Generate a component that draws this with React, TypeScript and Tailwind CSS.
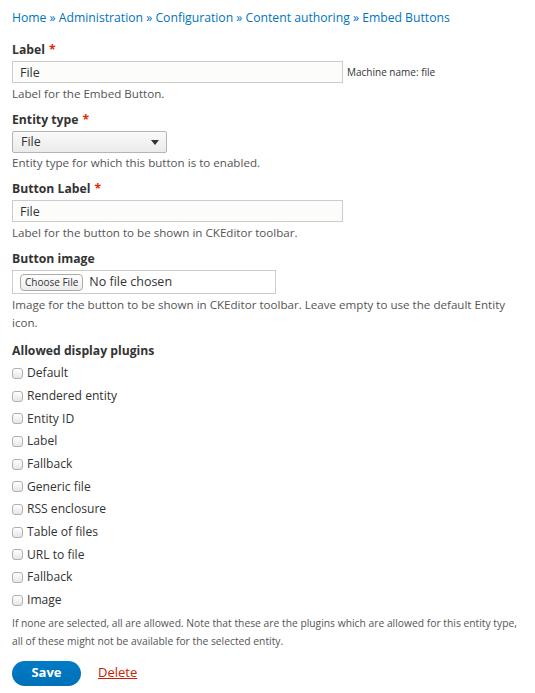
const plugins = [
  "Default",
  "Rendered entity",
  "Entity ID",
  "Label",
  "Fallback",
  "Generic file",
  "RSS enclosure",
  "Table of files",
  "URL to file",
  "Fallback",
  "Image",
];

function Req() {
  return <span className="ml-1 text-[#e62600]">*</span>;
}

export default function App() {
  return (
    <div
      className="min-h-[693px] bg-white px-3 pt-[9px] text-[#333]"
      style={{ fontFamily: '"Open Sans", "DejaVu Sans", sans-serif' }}
    >
      <nav className="text-[12.2px] leading-[18px] text-[#0074bd]">
        <a>Home</a> » <a>Administration</a> » <a>Configuration</a> »{" "}
        <a>Content authoring</a> » <a>Embed Buttons</a>
      </nav>

      {/* Label */}
      <div className="mt-[14px]">
        <label className="block text-[12.2px] font-bold leading-[18px]">
          Label
          <Req />
        </label>
        <div className="mt-[2px] flex items-center">
          <input
            defaultValue="File"
            className="h-[22px] w-[331px] border border-[#ccc] bg-[#fcfcfa] px-[7px] text-[12.5px] text-[#333] outline-0"
          />
          <span className="ml-1 text-[10px] text-[#333]">Machine name: file</span>
        </div>
        <p className="mt-[3px] text-[11.6px] leading-[16px] text-[#555]">
          Label for the Embed Button.
        </p>
      </div>

      {/* Entity type */}
      <div className="mt-[9px]">
        <label className="block text-[12.2px] font-bold leading-[18px]">
          Entity type
          <Req />
        </label>
        <div className="mt-[2px] flex h-[22px] w-[155px] items-center justify-between rounded-[2px] border border-[#b4b4b4] bg-gradient-to-b from-[#fafafa] to-[#ebebeb] pl-2 pr-[7px] text-[12.5px]">
          <span>File</span>
          <svg width="8" height="5" viewBox="0 0 8 5">
            <path d="M0 0h8L4 5z" fill="#333" />
          </svg>
        </div>
        <p className="mt-[2px] text-[11.6px] leading-[16px] text-[#555]">
          Entity type for which this button is to enabled.
        </p>
      </div>

      {/* Button Label */}
      <div className="mt-[9px]">
        <label className="block text-[12.2px] font-bold leading-[18px]">
          Button Label
          <Req />
        </label>
        <input
          defaultValue="File"
          className="mt-[2px] block h-[22px] w-[331px] border border-[#ccc] bg-[#fcfcfa] px-[7px] text-[12.5px] text-[#333] outline-0"
        />
        <p className="mt-[3px] text-[11.6px] leading-[16px] text-[#555]">
          Label for the button to be shown in CKEditor toolbar.
        </p>
      </div>

      {/* Button image */}
      <div className="mt-[9px]">
        <label className="block text-[12.2px] font-bold leading-[18px]">
          Button image
        </label>
        <div className="mt-[2px] flex h-[24px] w-[264px] items-center border border-[#ccc] bg-white pl-[7px] text-[12.5px]">
          <span className="rounded-[4px] border border-[#aaa] bg-gradient-to-b from-white to-[#ececec] px-[4px] text-[10px] leading-[15px]">
            Choose File
          </span>
          <span className="ml-[6px]">No file chosen</span>
        </div>
        <p className="mt-[2px] text-[11.6px] leading-[18px] text-[#555]">
          Image for the button to be shown in CKEditor toolbar. Leave empty to
          use the default Entity icon.
        </p>
      </div>

      {/* Allowed display plugins */}
      <div className="mt-[10px]">
        <div className="text-[12.2px] font-bold leading-[18px]">
          Allowed display plugins
        </div>
        <ul className="mt-[2px]">
          {plugins.map((p, i) => (
            <li key={i} className="flex h-[22.7px] items-center text-[12.1px]">
              <span className="h-[11px] w-[11px] rounded-[3px] border border-[#b0b0b0] bg-gradient-to-b from-white to-[#e6e6e6]" />
              <span className="ml-[4px]">{p}</span>
            </li>
          ))}
        </ul>
        <p className="mt-[2px] text-[10.3px] leading-[18px] text-[#555]">
          If none are selected, all are allowed. Note that these are the plugins
          which are allowed for this entity type, all of these might not be
          available for the selected entity.
        </p>
      </div>

      <div className="mt-[11px] flex items-center">
        <button className="h-[25px] w-[69px] rounded-full bg-gradient-to-b from-[#007bc6] to-[#0071b8] text-[13px] font-bold text-white">
          Save
        </button>
        <a className="ml-[17px] text-[13px] text-[#c72100] underline">Delete</a>
      </div>
    </div>
  );
}
